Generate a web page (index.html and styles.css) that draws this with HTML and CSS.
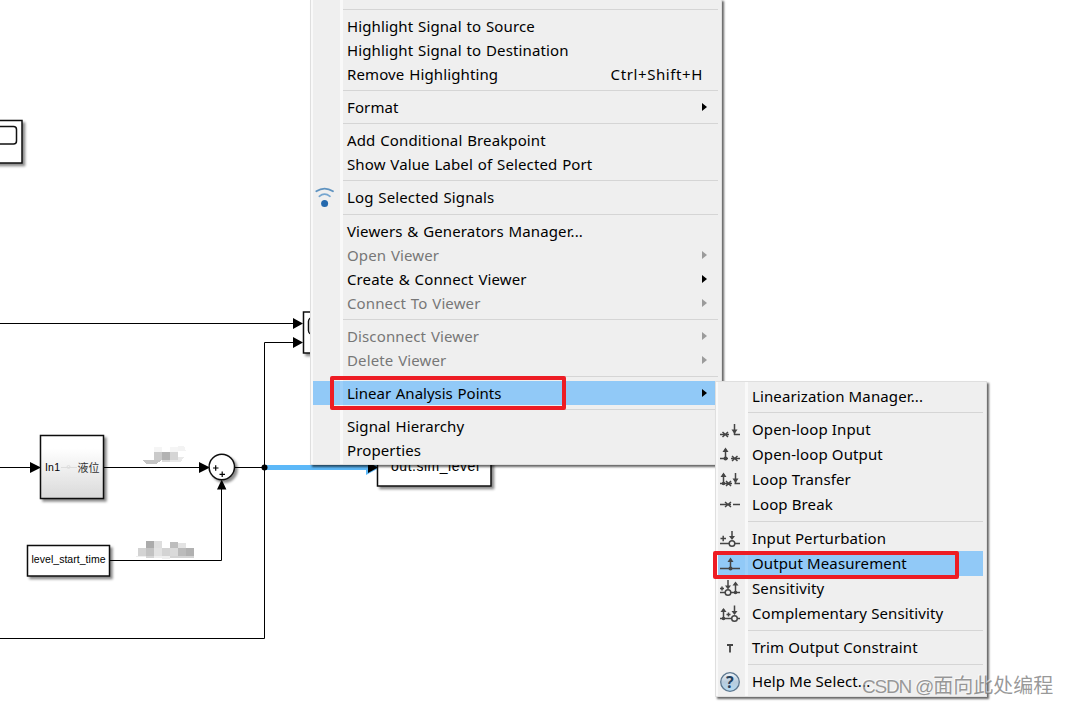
FILE: index.html
```
<!doctype html>
<html lang="en">
  <head>
    <meta charset="utf-8">
    <title>Linear Analysis Points</title>
    <link rel="stylesheet" href="styles.css">
  </head>
  <body>
    <!-- Block diagram -->
    <svg class="diagram" viewBox="0 0 1069 704">
      <defs>
        <linearGradient id="subsystem" x1="0" y1="0" x2="0" y2="1">
          <stop offset="0.2" stop-color="#fff" />
          <stop offset="1" stop-color="#d9d9d9" />
        </linearGradient>
        <filter id="shadow" x="-20%" y="-20%" width="150%" height="150%">
          <feDropShadow dx="2.5" dy="2.5" stdDeviation="1.3" flood-color="#000" flood-opacity="0.45" />
        </filter>
      </defs>

      <!-- Scopes -->
      <g class="block">
        <rect x="-30" y="120.5" width="52" height="42.5" filter="url(#shadow)" />
        <rect x="-20" y="126.5" width="36.5" height="17.5" rx="3" />
        <rect x="303.5" y="312" width="50" height="41" filter="url(#shadow)" />
        <rect x="308.5" y="317.5" width="40" height="17" rx="4" />
      </g>

      <!-- Signals -->
      <g class="signal">
        <path d="M0 323.5h295" />
        <path d="M295 342.5h-30.5v296H0" />
        <path d="M0 467.5h32M104 467.5h98M235 467.5h30" />
        <path d="M110 560.5h111.5V488" />
      </g>

      <!-- Selected signal -->
      <path class="selected" d="M265 467.5h108" />
      <path class="selected-head" d="M366 460l14 7.5-14 7.5z" />

      <path d="M293 318l10 5.5-10 5.5zM293 337l10 5.5-10 5.5zM30 462l11 5.5-11 5.5zM199 462l11 5.5-11 5.5zM368 462l10 5.5-10 5.5zM217 489.5l4.7-10 4.7 10z" />
      <circle cx="264.5" cy="467.5" r="3" />

      <!-- Blocks -->
      <g class="block">
        <rect x="40.5" y="435.5" width="63" height="63" fill="url(#subsystem)" filter="url(#shadow)" />
        <rect x="27.5" y="545.5" width="82" height="30.5" filter="url(#shadow)" />
        <circle cx="221.8" cy="467" r="12.7" filter="url(#shadow)" />
        <rect x="377.5" y="448" width="113.5" height="38" filter="url(#shadow)" />
      </g>
      <path class="faint" d="M61 467.5h16" />
      <circle class="faint" cx="68.5" cy="467" r="1.5" />
      <path class="sign" d="M213 468h5.5M215.7 465.3v5.5M219.5 474.3h5.5M222.2 471.5v5.5" />
      <text class="label" x="45" y="471" textLength="15">In1</text>
      <text class="label cjk" x="77.5" y="471.5">液位</text>
      <text class="label" x="31.5" y="563" textLength="74">level_start_time</text>
      <text class="label large" x="391" y="471" textLength="88">out.sim_level</text>

      <!-- Masked signal names -->
      <g shape-rendering="crispEdges">
        <path fill="#f5f5f5" d="M154 447h8v5h-8zM170 447h8v5h-8z" />
        <path fill="#f3f3f3" d="M178 446h6l2 5h-8z" />
        <path fill="#cacaca" d="M154 452h8v8h-8z" />
        <path fill="#b3b3b3" d="M162 452h8v8h-8z" />
        <path fill="#d5d5d5" d="M170 452h8v8h-8z" />
        <path fill="#e9e9e9" d="M178 457h6l-3 5h-11v-2h8z" />
        <path fill="#c4c4c4" d="M143 460h19l-6 4h-10z" />
        <path fill="#d9d9d9" d="M162 460h8v2h-8z" />
        <path fill="#ababab" d="M146 541h8v7h-8z" />
        <path fill="#dedede" d="M154 541h8v7h-8z" />
        <path fill="#bdbdbd" d="M170 542h8v6h-8z" />
        <path fill="#e3e3e3" d="M178 543h8v5h-8z" />
        <path fill="#d3d3d3" d="M138 548h8v8h-8zM162 548h8v8h-8z" />
        <path fill="#c2c2c2" d="M146 548h8v8h-8z" />
        <path fill="#e2e2e2" d="M154 548h8v8h-8z" />
        <path fill="#dadada" d="M170 548h8v8h-8z" />
        <path fill="#bbb" d="M178 548h8v8h-8z" />
        <path fill="#b1b1b1" d="M186 548h8v8h-8z" />
        <path fill="#eee" d="M136 556h10v1h-10zM154 556h8v2h-8zM162 556h8v3h-8z" />
        <path fill="#d4d4d4" d="M146 556h8v2h-8zM170 556h8v2h-8zM178 556h16v2h-16z" />
      </g>
    </svg>

    <!-- Signal context menu -->
    <div class="menu signal-menu">
      <div class="separator"></div>
      <div class="item"><span>Highlight Signal to Source</span></div>
      <div class="item"><span>Highlight Signal to Destination</span></div>
      <div class="item"><span>Remove Highlighting</span><span class="shortcut">Ctrl+Shift+H</span></div>
      <div class="separator"></div>
      <div class="item parent"><span>Format</span></div>
      <div class="separator"></div>
      <div class="item"><span>Add Conditional Breakpoint</span></div>
      <div class="item"><span>Show Value Label of Selected Port</span></div>
      <div class="separator"></div>
      <div class="item tall">
        <svg class="icon" viewBox="0 0 20 25">
          <g fill="none" stroke-linecap="round">
            <path d="M1.3 6.3Q9.5 0.8 18 6.3" stroke="#5f93c0" stroke-width="1.7" />
            <path d="M4.3 11.3Q9.5 6.8 15 11.3" stroke="#75a5cf" stroke-width="1.7" />
          </g>
          <circle cx="9.6" cy="18.5" r="3.5" fill="#2469ad" />
        </svg>
        <span>Log Selected Signals</span>
      </div>
      <div class="separator"></div>
      <div class="item"><span>Viewers &amp; Generators Manager...</span></div>
      <div class="item parent disabled"><span>Open Viewer</span></div>
      <div class="item parent"><span>Create &amp; Connect Viewer</span></div>
      <div class="item parent disabled"><span>Connect To Viewer</span></div>
      <div class="separator"></div>
      <div class="item parent disabled"><span>Disconnect Viewer</span></div>
      <div class="item parent disabled"><span>Delete Viewer</span></div>
      <div class="separator"></div>
      <div class="item parent active"><span>Linear Analysis Points</span></div>
      <div class="separator"></div>
      <div class="item"><span>Signal Hierarchy</span></div>
      <div class="item"><span>Properties</span></div>
    </div>

    <!-- Linear Analysis Points submenu -->
    <div class="menu submenu">
      <div class="item"><span>Linearization Manager...</span></div>
      <div class="separator"></div>
      <div class="item tall">
        <svg class="icon" viewBox="0 0 20 25">
          <path d="M0 17.5h9M2.5 15l5.5 5M8 15l-5.5 5M14 17.5h6M14.5 7v11" />
          <path class="head" d="M11.5 12.5h6l-3 4.5z" />
        </svg>
        <span>Open-loop Input</span>
      </div>
      <div class="item tall">
        <svg class="icon" viewBox="0 0 20 25">
          <path d="M0 16.5h8M5.5 7v9.5M11 16.5h9M12 14l5.5 5M17.5 14L12 19" />
          <path class="head" d="M2.5 10h6l-3-4.5z" />
          <circle cx="5.5" cy="16.5" r="2" />
        </svg>
        <span>Open-loop Output</span>
      </div>
      <div class="item tall">
        <svg class="icon" viewBox="0 0 20 25">
          <path d="M0 16.5h12M14.5 16.5H20M3.5 7v9.500M6 14l5 5M11 14l-5 5M15.500 6v11" />
          <path class="head" d="M0.5 10h6l-3-4.500zM12.500 11.500h6l-3 4.500z" />
          <circle cx="3.5" cy="16.5" r="1.8" />
        </svg>
        <span>Loop Transfer</span>
      </div>
      <div class="item tall">
        <svg class="icon" viewBox="0 0 20 25">
          <path d="M0 12.5h11M13 12.500h7M5 10l6 5M11 10l-6 5" />
        </svg>
        <span>Loop Break</span>
      </div>
      <div class="separator"></div>
      <div class="item tall">
        <svg class="icon" viewBox="0 0 20 25">
          <path d="M0 17.5h9M15 17.5h5M0.5 12.5h5.5M3.2 9.800v5.400M12 5v7" />
          <path class="head" d="M9 10h6l-3 4z" />
          <circle class="ring" cx="12" cy="17.5" r="2.8" />
        </svg>
        <span>Input Perturbation</span>
      </div>
      <div class="item tall active">
        <svg class="icon" viewBox="0 0 20 25">
          <path d="M0 17.5h20M10.5 9v9" />
          <path class="head" d="M7.5 11h6l-3-4.5z" />
          <circle cx="10.5" cy="17.5" r="2" />
        </svg>
        <span>Output Measurement</span>
      </div>
      <div class="item tall">
        <svg class="icon" viewBox="0 0 20 25">
          <path d="M0 16.5h5M11 16.5h9M0 12.5h4M2 10.5v4M8 4v7M15.5 7v10" />
          <path class="head" d="M5 9.5h6l-3 4zM12.500 9.500h6l-3-4z" />
          <circle class="ring" cx="8" cy="16.5" r="2.8" />
          <circle cx="15.5" cy="16.5" r="1.8" />
        </svg>
        <span>Sensitivity</span>
      </div>
      <div class="item tall">
        <svg class="icon" viewBox="0 0 20 25">
          <path d="M0 17.5h11M17.5 17.5h2.500M6.500 13.500h4M8.500 11.500v4M14.500 4.500v7M3.500 8v9" />
          <path class="head" d="M0.5 11h6l-3-4zM11.500 10h6l-3 4z" />
          <circle class="ring" cx="14.5" cy="17.5" r="2.8" />
          <circle cx="3.5" cy="17.5" r="1.8" />
        </svg>
        <span>Complementary Sensitivity</span>
      </div>
      <div class="separator"></div>
      <div class="item tall">
        <svg class="icon" viewBox="0 0 20 25">
          <path class="trim" d="M7 10h6M10 10v7.5" />
        </svg>
        <span>Trim Output Constraint</span>
      </div>
      <div class="separator"></div>
      <div class="item tall">
        <svg class="icon help" viewBox="0 0 20 25">
          <defs>
            <linearGradient id="help" x1="0" y1="0" x2="0" y2="1">
              <stop offset="0" stop-color="#f4f7fa" />
              <stop offset="0.5" stop-color="#b7cbdc" />
              <stop offset="1" stop-color="#b4dcf4" />
            </linearGradient>
          </defs>
          <circle class="badge" cx="10" cy="13" r="9.3" />
          <text x="10" y="18.8">?</text>
        </svg>
        <span>Help Me Select...</span>
      </div>
    </div>

    <!-- Callouts -->
    <div class="callout callout-points"></div>
    <div class="callout callout-output"></div>

    <div class="watermark"><span class="site">CSDN @</span>面向此处编程</div>
  </body>
</html>
```
FILE: styles.css
```
:root {
  --menu-background: #efefef;
  --menu-light: #f9f9f9;
  --highlight: #91c9f7;
  --line: #d5d5d5;
  --callout: #ed1c24;
}

body {
  position: relative;
  width: 1069px;
  height: 704px;
  margin: 0;
  overflow: hidden;
  background-color: #fff;
  color: #000;
  font-family: "Noto Sans", "Segoe UI", sans-serif;
}

/* Diagram */
.diagram {
  display: block;
  width: 1069px;
  height: 704px;
}

.block {
  fill: #fff;
  stroke: #111;
  stroke-width: 1.5;
}

.signal {
  fill: none;
  stroke: #000;
  stroke-width: 1;
}

.selected {
  stroke: #5cb8f8;
  stroke-width: 5;
}

.selected-head {
  fill: #5cb8f8;
}

.faint {
  fill: none;
  stroke: #ddd;
  stroke-width: 1;
}

.sign {
  stroke: #000;
  stroke-width: 1.2;
}

.label {
  font-family: "Liberation Sans", Arial, sans-serif;
  font-size: 10.5px;
}

.label.cjk {
  font-family: "Noto Sans CJK SC", sans-serif;
  font-size: 11px;
  fill: #333;
}

.label.large {
  font-size: 14px;
}

/* Menus */
.menu {
  position: absolute;
  box-sizing: border-box;
  border: 1px solid #dfdfdf;
  background: linear-gradient(
    to right,
    var(--menu-light) 2px,
    var(--menu-background) 2px 29px,
    var(--menu-light) 29px 32px,
    var(--menu-background) 32px
  );
  box-shadow: 2px 2px 2px rgba(0, 0, 0, 0.6);
  font-size: 15px;
  letter-spacing: 0.12px;
}

.signal-menu {
  left: 310px;
  top: -1px;
  width: 412px;
  height: 466px;
  padding: 5px 3px 0 2px;
  word-spacing: 0.8px;
}

.submenu {
  left: 715px;
  top: 381px;
  width: 272px;
  height: 316px;
  padding: 2px 3px 0 2px;
}

.item {
  display: flex;
  position: relative;
  align-items: center;
  height: 24px;
  padding-left: 34px;
  line-height: 24px;
  white-space: nowrap;
}

.item.tall {
  height: 25px;
}

.item.tall span {
  padding-bottom: 1px;
}

.item.active {
  background: linear-gradient(
    to right,
    var(--highlight) 27px,
    #9dcff9 27px 30px,
    var(--highlight) 30px
  );
}

.signal-menu .active {
  letter-spacing: 0;
}

.item.disabled {
  color: #777;
}

.item.parent::after {
  content: "";
  margin-left: auto;
  margin-right: 11px;
  border: solid transparent;
  border-width: 4px 0 4px 5px;
  border-left-color: currentColor;
}

.item.disabled::after {
  opacity: 0.7;
}

.shortcut {
  margin-left: auto;
  margin-right: 15px;
  letter-spacing: 0.6px;
}

.separator {
  height: 1px;
  margin: 4px 0 4px 30px;
  background-color: var(--line);
}

.icon {
  width: 20px;
  height: 25px;
  margin-left: -32px;
  margin-right: 12px;
  fill: #444;
  stroke: #444;
  stroke-width: 1.5;
}

.icon path {
  fill: none;
}

.icon circle {
  stroke: none;
}

.icon .head {
  fill: #444;
  stroke: none;
}

.icon .ring {
  fill: var(--menu-background);
  stroke: #444;
}

.icon .trim {
  stroke-width: 1.8;
}

.help .badge {
  fill: url(#help);
  stroke: #5d7890;
  stroke-width: 1.3;
}

.help text {
  fill: #24405c;
  stroke: none;
  font-size: 16px;
  font-weight: 700;
  text-anchor: middle;
}

/* Red frames over the menus */
.callout {
  position: absolute;
  box-sizing: border-box;
  border: 4px solid var(--callout);
  border-radius: 2px;
}

.callout-points {
  left: 330px;
  top: 376px;
  width: 236px;
  height: 34px;
}

.callout-output {
  left: 713px;
  top: 551px;
  width: 246px;
  height: 28px;
}

.watermark {
  position: absolute;
  left: 862px;
  top: 671px;
  color: rgba(120, 120, 120, 0.75);
  font-family: "Noto Sans CJK SC", sans-serif;
  font-size: 20px;
  line-height: 28px;
  white-space: nowrap;
  text-shadow: -1px -1px 0 rgba(255, 255, 255, 0.6);
}

.watermark .site {
  font-family: "Liberation Sans", Arial, sans-serif;
  font-size: 19px;
  letter-spacing: -1.2px;
}
```
